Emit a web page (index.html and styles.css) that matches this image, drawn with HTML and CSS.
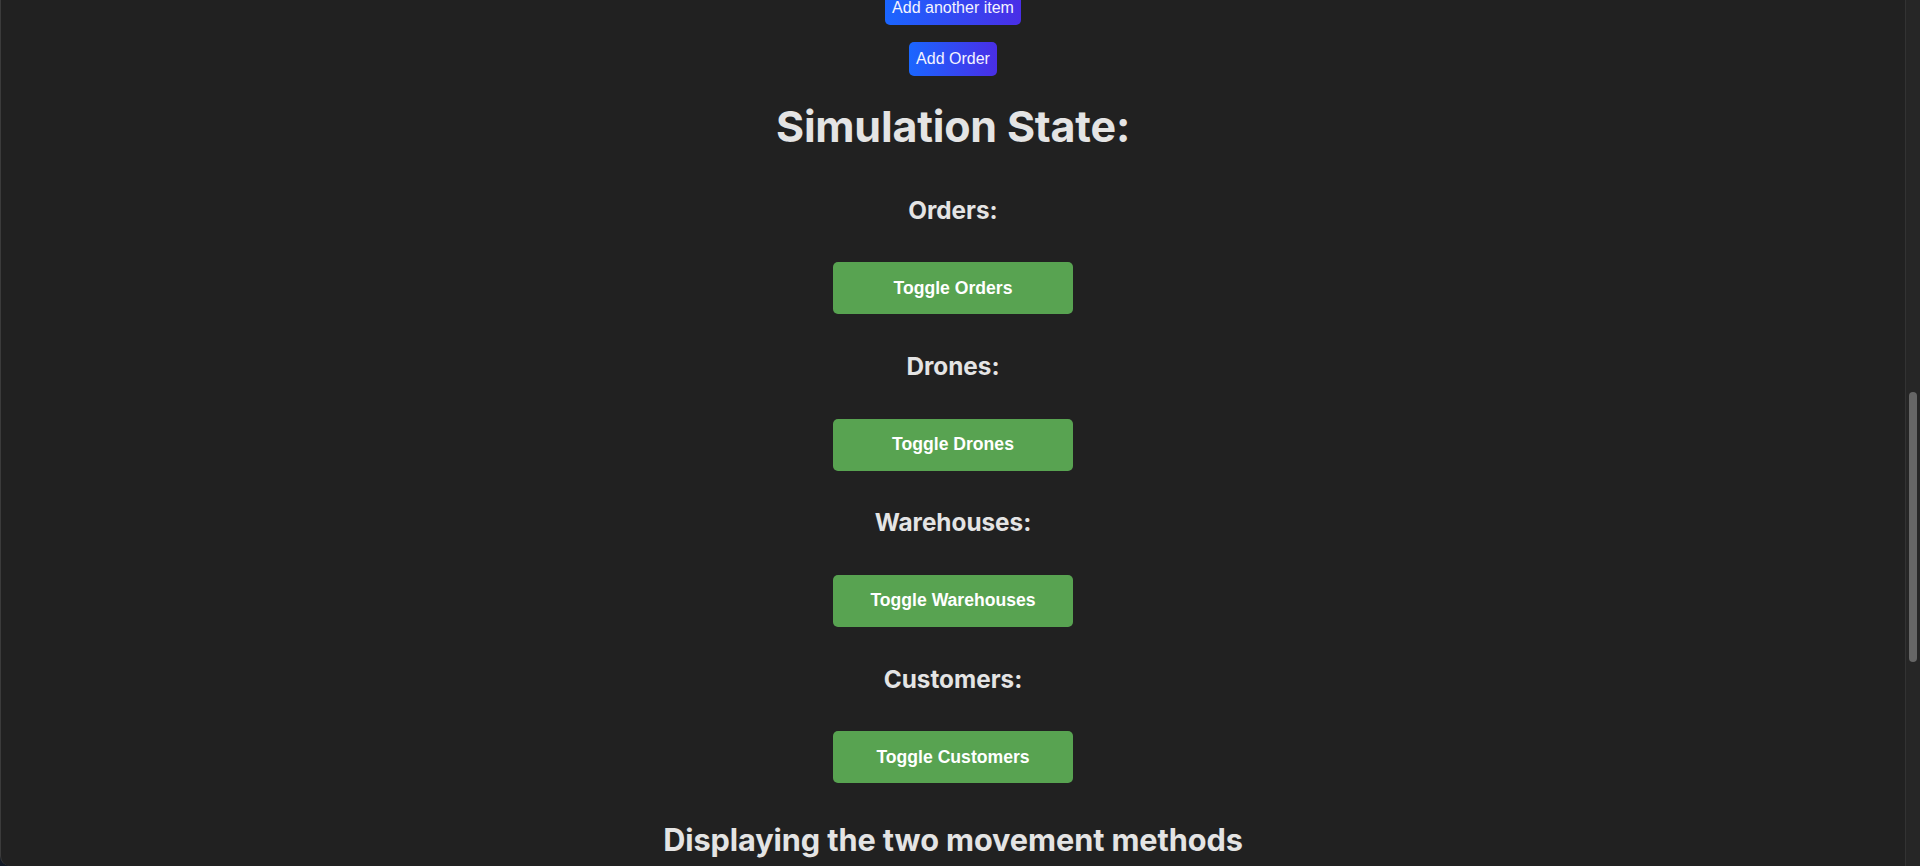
FILE: index.html
```html
<!DOCTYPE html>
<html lang="en">
<head>
<meta charset="utf-8">
<title>Simulation</title>
<link rel="stylesheet" href="styles.css">
</head>
<body>
<div class="frame">
  <main class="content">
    <button class="grad-btn first">Add another item</button>
    <button class="grad-btn second">Add Order</button>
    <h2 class="title">Simulation State:</h2>
    <section class="state">
      <h3 class="sub">Orders:</h3>
      <button class="toggle">Toggle Orders</button>
      <h3 class="sub">Drones:</h3>
      <button class="toggle">Toggle Drones</button>
      <h3 class="sub">Warehouses:</h3>
      <button class="toggle">Toggle Warehouses</button>
      <h3 class="sub">Customers:</h3>
      <button class="toggle">Toggle Customers</button>
    </section>
    <h2 class="title methods">Displaying the two movement methods</h2>
  </main>
  <div class="scroll-track"><div class="scroll-thumb"></div></div>
</div>
</body>
</html>
```
FILE: styles.css
```css
html, body {
  margin: 0;
  padding: 0;
  height: 100%;
  background: #131a26;
  overflow: hidden;
}
.frame {
  display: flex;
  height: 866px;
  background: #212121;
  border-left: 1px solid #3b3b3b;
  border-bottom-left-radius: 10px;
  overflow: hidden;
}
.content {
  flex: 1;
  display: flex;
  flex-direction: column;
  align-items: center;
  font-family: Inter, "Noto Sans", sans-serif;
  color: #e4e4e4;
}
.grad-btn {
  font-family: "Liberation Sans", Arial, sans-serif;
  font-size: 16px;
  line-height: 18.4px;
  padding: 8px 7.5px;
  border: none;
  border-radius: 5px;
  color: #f4f4ff;
  background: linear-gradient(90deg, #1a66ff 0%, #4a2ee6 100%);
}
.grad-btn.first { margin-top: -9px; }
.grad-btn.second { margin-top: 16.6px; }
.title {
  margin: 23.2px 0 0;
  font-size: 43px;
  line-height: 52px;
  font-weight: 700;
  letter-spacing: -0.2px;
}
.state {
  display: flex;
  flex-direction: column;
  align-items: center;
  margin-top: 44px;
}
.sub {
  margin: 37.8px 0 37.8px;
  font-size: 24.3px;
  line-height: 28.8px;
  font-weight: 700;
}
.sub:first-child { margin-top: 0; }
.toggle {
  width: 240px;
  height: 52px;
  border: none;
  border-radius: 5px;
  background: #58a351;
  color: #ffffff;
  font-family: "Liberation Sans", Arial, sans-serif;
  font-weight: 700;
  font-size: 17.6px;
}
.title.methods {
  margin-top: 38px;
  font-size: 30.7px;
  line-height: 38px;
  letter-spacing: -0.1px;
}
.scroll-track {
  width: 14px;
  flex: none;
  background: #262626;
  border-left: 1px solid #333333;
  display: flex;
  flex-direction: column;
  align-items: center;
}
.scroll-thumb {
  margin-top: 392px;
  width: 8px;
  height: 270px;
  border-radius: 4px;
  background: #666666;
}
```
